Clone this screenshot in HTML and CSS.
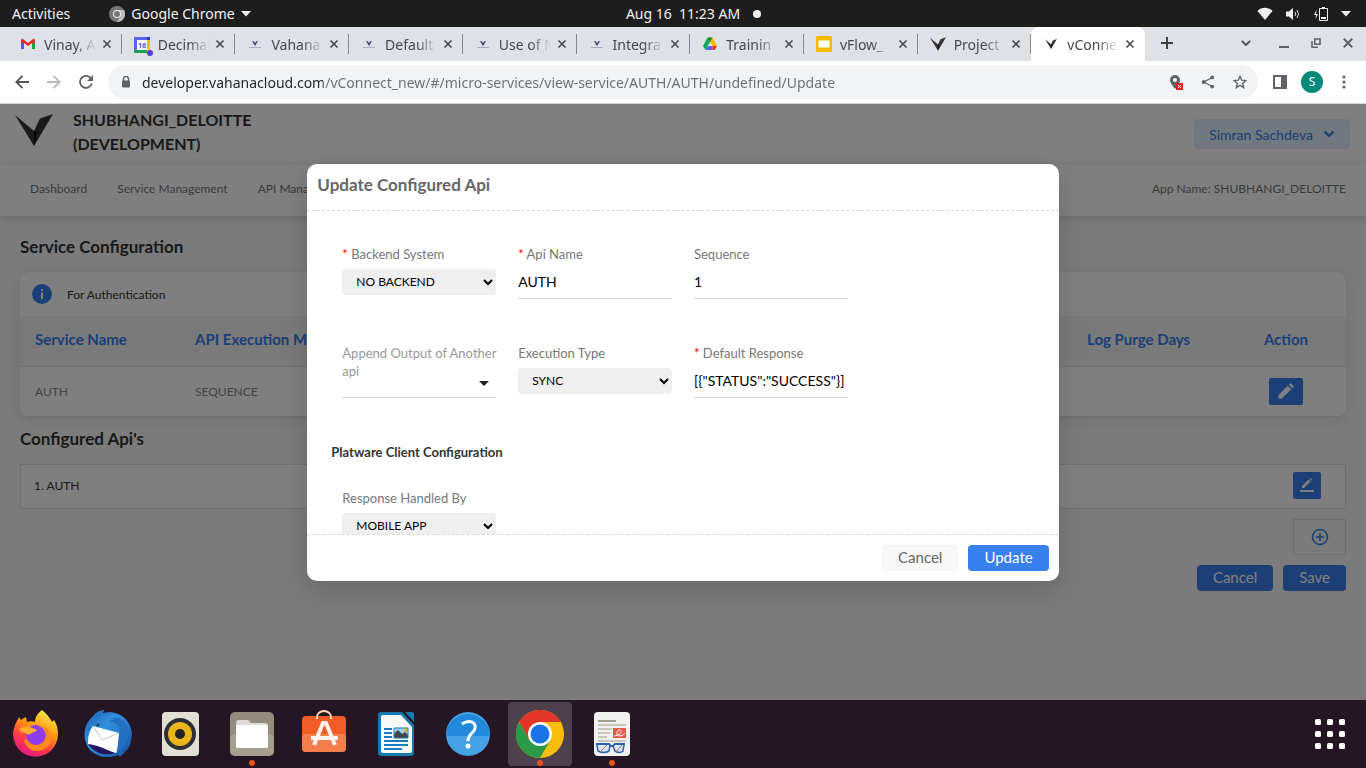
FILE: index.html
```html
<!DOCTYPE html>
<html lang="en">
<head>
  <meta charset="UTF-8">
  <title>vConnect</title>
  <link rel="stylesheet" href="styles.css">
</head>
<body>
  <svg class="defs" aria-hidden="true">
    <symbol id="close" viewBox="0 0 10 10"><path d="M1.5 1.5l7 7M8.5 1.5l-7 7" stroke="currentColor" stroke-width="1.6" fill="none"/></symbol>
    <symbol id="vahana-small" viewBox="0 0 16 16"><path d="M5 5l2.2.6L8 7.5l1-2 2-.5-3 5z" fill="#39396b"/><path d="M2 11.5h12" stroke="#a9aec4" stroke-width="1"/></symbol>
    <symbol id="vahana" viewBox="0 0 38 32"><path d="M0 1l19 16 6-12.500L38 0 19 32z" fill="#353535"/><path d="M19 17l3 2-3 13z" fill="#000"/></symbol>
  </svg>

  <div class="topbar">
    <div class="topbar-left">
      <button class="top-button">Activities</button>
      <button class="top-button app-menu">
        <svg width="16" height="16" viewBox="0 0 16 16"><circle cx="8" cy="8" r="8" fill="#777"/><path d="M8 4h7a8 8 0 0 1-7 12l3.500-6z" fill="#bbb"/><circle cx="8" cy="8" r="4" fill="#eee"/><circle cx="8" cy="8" r="3" fill="#777"/></svg>
        Google Chrome
        <svg width="10" height="6" viewBox="0 0 10 6"><path d="M0 0h10L5 5.500z" fill="#f2f2f2"/></svg>
      </button>
    </div>
    <button class="top-button clock">Aug 16&nbsp; 11:23 AM <span class="notice-dot"></span></button>
    <div class="topbar-right">
      <svg width="16" height="14" viewBox="0 0 16 14"><path d="M.5 4C4.500-.2 11.500-.2 15.500 4L8 13z" fill="#f2f2f2"/></svg>
      <svg width="16" height="14" viewBox="0 0 16 14"><path d="M1 4.500h3L8 1v12L4 9.500H1z" fill="#f2f2f2"/><path d="M10 5q1.500 2 0 4M12 3q3 4 0 8" stroke="#ddd" fill="none"/></svg>
      <svg width="16" height="16" viewBox="0 0 16 16"><path d="M3.500 4L1 9h2l-.5 4L5 8H3z" fill="#f2f2f2"/><path d="M6.500 2.500h8v12h-8zM9 1.500h3" stroke="#f2f2f2" fill="none"/><path d="M8 11h5v2H8z" fill="#f2f2f2"/></svg>
      <svg width="10" height="6" viewBox="0 0 10 6"><path d="M0 0h10L5 5.500z" fill="#f2f2f2"/></svg>
    </div>
  </div>

  <div class="tabstrip">
    <div class="tabs">
      <div class="tab">
        <svg width="16" height="16" viewBox="0 0 16 16"><path d="M1 13V5l3 2v6z" fill="#4a5bf0"/><path d="M12 13V7l3-2v8z" fill="#17a34a"/><path d="M1 6V4q0-1.500 2-1l5 4 5-4q2-.5 2 1v2l-3 2V7l-4 3-4-3v1z" fill="#ea2b1f"/></svg>
        <span class="tab-title">Vinay, Ajay</span>
        <button class="tab-close" aria-label="Close"><svg width="10" height="10"><use href="#close"/></svg></button>
      </div>
      <div class="tab">
        <svg width="16" height="17" viewBox="0 0 16 17"><path d="M0 1h13v3H3v13H0z" fill="#5b63f5"/><path d="M13 1h3v3h-3z" fill="#2b3bc0"/><path d="M13 4h3v10h-3z" fill="#fbbc04"/><path d="M0 14h13v3H0z" fill="#16a34a"/><path d="M3 4h10v10H3z" fill="#fff"/><text x="8" y="12" class="cal-day">16</text><circle cx="16" cy="17" r="3" fill="#4a3df0"/></svg>
        <span class="tab-title">Decimal</span>
        <button class="tab-close" aria-label="Close"><svg width="10" height="10"><use href="#close"/></svg></button>
      </div>
      <div class="tab">
        <svg width="16" height="16"><use href="#vahana-small"/></svg>
        <span class="tab-title">Vahana</span>
        <button class="tab-close" aria-label="Close"><svg width="10" height="10"><use href="#close"/></svg></button>
      </div>
      <div class="tab">
        <svg width="16" height="16"><use href="#vahana-small"/></svg>
        <span class="tab-title">Default</span>
        <button class="tab-close" aria-label="Close"><svg width="10" height="10"><use href="#close"/></svg></button>
      </div>
      <div class="tab">
        <svg width="16" height="16"><use href="#vahana-small"/></svg>
        <span class="tab-title">Use of N</span>
        <button class="tab-close" aria-label="Close"><svg width="10" height="10"><use href="#close"/></svg></button>
      </div>
      <div class="tab">
        <svg width="16" height="16"><use href="#vahana-small"/></svg>
        <span class="tab-title">Integra</span>
        <button class="tab-close" aria-label="Close"><svg width="10" height="10"><use href="#close"/></svg></button>
      </div>
      <div class="tab">
        <svg width="16" height="16" viewBox="0 0 16 16"><path d="M5.500 1.500L8 6 3.500 14 1 10z" fill="#12a85a"/><path d="M5.500 1.500h5L15 10h-4.500z" fill="#fbbc04"/><path d="M5.500 1.500h5L8 6z" fill="#0b8043"/><path d="M3.500 14L6 10h4.500v4z" fill="#5b63f5"/><path d="M10.500 10H15l-2.500 4h-2z" fill="#ea2b1f"/></svg>
        <span class="tab-title">Trainin</span>
        <button class="tab-close" aria-label="Close"><svg width="10" height="10"><use href="#close"/></svg></button>
      </div>
      <div class="tab">
        <svg width="16" height="16" viewBox="0 0 16 16"><rect width="16" height="16" rx="1.500" fill="#f5b90a"/><path d="M2.500 4.500h11v7h-11z" fill="#fff"/></svg>
        <span class="tab-title">vFlow_</span>
        <button class="tab-close" aria-label="Close"><svg width="10" height="10"><use href="#close"/></svg></button>
      </div>
      <div class="tab">
        <svg width="16" height="16"><use href="#vahana"/></svg>
        <span class="tab-title">Project</span>
        <button class="tab-close" aria-label="Close"><svg width="10" height="10"><use href="#close"/></svg></button>
      </div>
      <div class="tab active">
        <svg width="16" height="10"><use href="#vahana"/></svg>
        <span class="tab-title">vConne</span>
        <button class="tab-close" aria-label="Close"><svg width="10" height="10"><use href="#close"/></svg></button>
      </div>
    </div>
    <button class="icon-button new-tab" aria-label="New tab"><svg width="12" height="12" viewBox="0 0 12 12"><path d="M6 0v12M0 6h12" stroke="#3c4043" stroke-width="2"/></svg></button>
    <div class="window-controls">
      <button class="icon-button tab-search" aria-label="Search tabs"><svg width="10" height="6" viewBox="0 0 10 6"><path d="M.8.8L5 5 9.200.8" stroke="#4a4d52" stroke-width="1.800" fill="none"/></svg></button>
      <button class="icon-button" aria-label="Minimize"><svg width="10" height="10" viewBox="0 0 10 10"><path d="M0 9h10" stroke="#5f6368" stroke-width="2"/></svg></button>
      <button class="icon-button" aria-label="Restore"><svg width="10" height="10" viewBox="0 0 10 10"><path d="M3.800 1h5.200v5.200H3.800zM1 3v6.200h6" stroke="#5f6368" stroke-width="1.600" fill="none"/></svg></button>
      <button class="icon-button" aria-label="Close window"><svg width="10" height="10" viewBox="0 0 10 10"><path d="M.8.8l8.400 8.400M9.200.8L.8 9.200" stroke="#5f6368" stroke-width="2"/></svg></button>
    </div>
  </div>

  <div class="toolbar">
    <button class="icon-button" aria-label="Back"><svg width="14" height="14" viewBox="0 0 14 14"><path d="M14 7H1.500M7.500.8L1.300 7l6.200 6.200" stroke="#4f5357" stroke-width="1.800" fill="none"/></svg></button>
    <button class="icon-button" aria-label="Forward"><svg width="14" height="14" viewBox="0 0 14 14"><path d="M0 7h12.500M6.500.8L12.700 7l-6.200 6.200" stroke="#b8babd" stroke-width="1.800" fill="none"/></svg></button>
    <button class="icon-button" aria-label="Reload"><svg width="14" height="14" viewBox="0 0 14 14"><path d="M12 3.500A6 6 0 1 0 12.800 8.500" stroke="#5f6368" stroke-width="1.800" fill="none"/><path d="M14 0v6H8z" fill="#5f6368"/></svg></button>
    <div class="omnibox">
      <svg width="10" height="12" viewBox="0 0 10 12"><path d="M2.500 5V3a2.500 2.500 0 0 1 5 0v2" stroke="#5f6368" stroke-width="1.400" fill="none"/><rect x="1" y="4.500" width="8" height="7" rx="1" fill="#5f6368"/></svg>
      <input class="url" type="text" aria-label="Address" value="developer.vahanacloud.com/vConnect_new/#/micro-services/view-service/AUTH/AUTH/undefined/Update">
      <button class="icon-button" aria-label="Location blocked"><svg width="16" height="16" viewBox="0 0 16 16"><path d="M7 15C4 11 2 9 2 6a5 5 0 0 1 10 0c0 3-2 5-5 9z" fill="#5f6368"/><circle cx="7" cy="6" r="2" fill="#f1f3f4"/><rect x="8" y="9" width="7" height="7" fill="#e42020"/><path d="M10 11l3 3M13 11l-3 3" stroke="#fff"/></svg></button>
      <button class="icon-button" aria-label="Share"><svg width="14" height="14" viewBox="0 0 14 14"><path d="M11 2.500L3 7l8 4.500" stroke="#5f6368" stroke-width="1.300" fill="none"/><circle cx="11.200" cy="2.400" r="1.900" fill="#5f6368"/><circle cx="2.600" cy="7" r="1.900" fill="#5f6368"/><circle cx="11.200" cy="11.600" r="1.900" fill="#5f6368"/></svg></button>
      <button class="icon-button" aria-label="Bookmark"><svg width="14" height="14" viewBox="0 0 14 14"><path d="M7 1.300l1.700 3.900 4.200.4-3.200 2.800 1 4.200L7 10.400l-3.700 2.200 1-4.200-3.200-2.800 4.200-.4z" stroke="#5f6368" stroke-width="1.400" fill="none"/></svg></button>
    </div>
    <button class="icon-button" aria-label="Side panel"><svg width="14" height="14" viewBox="0 0 14 14"><path d="M1 1h12v12H1z" stroke="#5f6368" stroke-width="2" fill="none"/><path d="M8 1h5v12H8z" fill="#5f6368"/></svg></button>
    <button class="icon-button" aria-label="Profile"><span class="avatar">S</span></button>
    <button class="icon-button" aria-label="Menu"><svg width="4" height="14" viewBox="0 0 4 14" fill="#5f6368"><circle cx="2" cy="2" r="1.600"/><circle cx="2" cy="7" r="1.600"/><circle cx="2" cy="12" r="1.600"/></svg></button>
  </div>

  <div class="page">
    <header class="header">
      <svg width="38" height="32"><use href="#vahana"/></svg>
      <div class="app-title">SHUBHANGI_DELOITTE<br>(DEVELOPMENT)</div>
      <button class="user-button">Simran Sachdeva
        <svg width="12" height="8" viewBox="0 0 12 8"><path d="M1.500 1.500L6 6l4.500-4.500" stroke="#3880ed" stroke-width="2.200" fill="none"/></svg>
      </button>
    </header>
    <nav class="nav">
      <a href="#">Dashboard</a>
      <a href="#">Service Management</a>
      <a href="#">API Management</a>
      <span class="app-name">App Name: SHUBHANGI_DELOITTE</span>
    </nav>

    <main class="content">
      <h1>Service Configuration</h1>
      <section class="card">
        <div class="card-info">
          <svg width="20" height="20" viewBox="0 0 20 20"><circle cx="10" cy="10" r="10" fill="#3880ed"/><path d="M9 8.500h2V15H9zM9 5h2v2H9z" fill="#fff"/></svg>
          For Authentication
        </div>
        <table class="services">
          <thead>
            <tr><th class="col-name">Service Name</th><th>API Execution Mode</th><th class="col-days">Log Purge Days</th><th class="col-action">Action</th></tr>
          </thead>
          <tbody>
            <tr>
              <td>AUTH</td><td>SEQUENCE</td><td></td>
              <td class="col-action"><button class="edit-button wide" aria-label="Edit service"><svg width="16" height="16" viewBox="0 0 16 16"><path d="M.5 15.500V12L9.800 2.700l3.500 3.500L4 15.500zM10.800 1.700l1-1q.8-.7 1.600 0l1.900 1.900q.7.8 0 1.600l-1 1z" fill="#fff"/></svg></button></td>
            </tr>
          </tbody>
        </table>
      </section>

      <h1 class="api-title">Configured Api's</h1>
      <div class="api-row">
        1. AUTH
        <button class="edit-button" aria-label="Edit api"><svg width="14" height="14" viewBox="0 0 14 14"><path d="M2 10V8l6.500-6.500 2 2L4 10zM9.300.8L10.500 0l1.500 1.500-.8 1.200zM0 12h14v2H0z" fill="#fff"/></svg></button>
      </div>
      <div class="page-actions">
        <button class="add-button" aria-label="Add api"><svg width="18" height="18" viewBox="0 0 18 18"><circle cx="9" cy="9" r="7.500" stroke="#3880ed" stroke-width="1.600" fill="none"/><path d="M9 5v8M5 9h8" stroke="#3880ed" stroke-width="1.600"/></svg></button>
      </div>
      <div class="page-actions">
        <button class="button primary">Cancel</button>
        <button class="button primary">Save</button>
      </div>
    </main>

    <div class="overlay">
      <form class="modal" role="dialog" aria-labelledby="modal-title">
        <h2 class="modal-header" id="modal-title">Update Configured Api</h2>
        <div class="modal-body">
          <div class="fields">
            <div class="field">
              <label for="backend"><span class="required">*</span> Backend System</label>
              <select id="backend"><option>NO BACKEND</option></select>
            </div>
            <div class="field">
              <label for="api-name"><span class="required">*</span> Api Name</label>
              <input id="api-name" type="text" value="AUTH">
            </div>
            <div class="field">
              <label for="sequence">Sequence</label>
              <input id="sequence" type="text" value="1">
            </div>
            <div class="field append">
              <label for="append">Append Output of Another api</label>
              <select id="append" class="line-select"><option></option></select>
            </div>
            <div class="field">
              <label for="execution">Execution Type</label>
              <select id="execution"><option>SYNC</option></select>
            </div>
            <div class="field">
              <label for="response"><span class="required">*</span> Default Response</label>
              <input id="response" type="text" value="[{&quot;STATUS&quot;:&quot;SUCCESS&quot;}]">
            </div>
          </div>
          <h3>Platware Client Configuration</h3>
          <div class="fields">
            <div class="field">
              <label for="handled">Response Handled By</label>
              <select id="handled"><option>MOBILE APP</option></select>
            </div>
          </div>
        </div>
        <div class="modal-footer">
          <button type="button" class="button">Cancel</button>
          <button type="button" class="button primary">Update</button>
        </div>
      </form>
    </div>
  </div>

  <div class="dock">
    <button class="dock-item" aria-label="Firefox">
      <svg width="48" height="48" viewBox="0 0 48 48">
        <defs><linearGradient id="fx" x1=".8" y1="0" x2=".3" y2="1"><stop offset="0" stop-color="#fff44f"/><stop offset=".4" stop-color="#ff980e"/><stop offset=".7" stop-color="#ff3b47"/><stop offset="1" stop-color="#e31587"/></linearGradient></defs>
        <path d="M30 0c5 4 8 8 10 12l2-2c3 5 4 9 4 14a22.500 22.500 0 1 1-43-9c1-3 3-5 4-8l2 3c1-1 3-2 5-3l1 5c2-1 6-1 8 0 0-5 3-9 7-12z" fill="url(#fx)"/>
        <circle cx="24" cy="25" r="10" fill="#8e3df0"/><path d="M15 29c2 5 6 6 10 6 6-1 9-5 9-10-1-5-4-8-8-9 9 0 13 5 13 12s-6 13-14 13c-7 0-12-5-13-11z" fill="#ff8a1c"/><path d="M7 19c5-3 10-3 18 1-2 3-6 2-8 5-4-3-9-2-10-6z" fill="#ffad2b"/>
      </svg>
    </button>
    <button class="dock-item" aria-label="Thunderbird">
      <svg width="48" height="48" viewBox="0 0 48 48">
        <defs><linearGradient id="tb" x1="0" y1="0" x2="1" y2="1"><stop offset="0" stop-color="#1b5fae"/><stop offset=".4" stop-color="#3092e0"/><stop offset="1" stop-color="#174b9c"/></linearGradient></defs>
        <path d="M10 5C14 0 20 0 20 0l-1 3c15-4 29 7 29 22l-2 10c-3 7-8 9-10 12l-2-2c-10 4-20 2-27-4C-1 33-2 18 6 9z" fill="url(#tb)"/>
        <path d="M9 16l26 7-2 20C22 42 12 38 4 34c0-7 1-13 5-18z" fill="#fff"/><path d="M9 16l9 14 17-7" stroke="#c2c6cc" fill="none"/>
        <path d="M4 34c9 1 15 4 27 9-9 3-20 1-27-9z" fill="#26155b"/><path d="M35 23c4-6-4-12-11-11l8-5c8 2 13 9 12 21-2 7-8 11-12 16 2-8 5-14 3-21z" fill="#236fc4"/><circle cx="14" cy="15" r="1.500" fill="#173a66"/>
      </svg>
    </button>
    <button class="dock-item" aria-label="Rhythmbox">
      <svg width="48" height="48" viewBox="0 0 48 48"><rect x="6" y="2" width="37" height="44" rx="4" fill="#e2dfd4"/><circle cx="24" cy="24" r="16" fill="#2c3035"/><circle cx="24" cy="24" r="12" fill="#e9b51b"/><circle cx="24" cy="24" r="5" fill="#222"/></svg>
    </button>
    <button class="dock-item running" aria-label="Files">
      <svg width="48" height="48" viewBox="0 0 48 48"><rect x="2" y="2" width="44" height="44" rx="5" fill="#948b7b"/><rect x="2" y="24" width="44" height="22" rx="5" fill="#a69e8e"/><path d="M8 13q0-3 3-3h8q2 0 3 2l1 1h14q3 0 3 3v19q0 3-3 3H11q-3 0-3-3z" fill="#dedbd4"/><rect x="8" y="15" width="32" height="23" rx="2" fill="#fff"/></svg>
    </button>
    <button class="dock-item" aria-label="Software">
      <svg width="48" height="48" viewBox="0 0 48 48"><rect x="2" y="6" width="44" height="36" rx="4" fill="#f25d27"/><rect x="2" y="24" width="44" height="18" rx="4" fill="#f47e4c"/><path d="M17 9V7a7 6 0 0 1 14 0v2" stroke="#ffd9b8" stroke-width="2" fill="none"/><path d="M14 35l9-22h3l9 22M11 28h27" stroke="#fff3ec" stroke-width="4" fill="none"/></svg>
    </button>
    <button class="dock-item" aria-label="LibreOffice Writer">
      <svg width="48" height="48" viewBox="0 0 48 48"><path d="M9 2h21l12 13v28q0 3-3 3H9q-3 0-3-3V5q0-3 3-3z" fill="#1679ae"/><path d="M33 2h7q2 0 2 2v8z" fill="#1679ae"/><path d="M11 5h18l11 12v24q0 2-2 2H11q-2 0-2-2V7q0-2 2-2z" fill="#f8f8f8"/><path d="M12 19h8M12 23h8M12 27h8M12 31h24M12 35h24M12 39h18" stroke="#167fbb" stroke-width="2"/><rect x="22" y="18" width="14" height="10" fill="#9fd2f2"/><path d="M22 28v-4l4-4 4 4 3-2 3 3v3z" fill="#444"/><circle cx="34" cy="20" r="2" fill="#f5b80a"/><path d="M22 18h14v10H22z" stroke="#167fbb" fill="none"/></svg>
    </button>
    <button class="dock-item" aria-label="Help">
      <svg width="48" height="48" viewBox="0 0 48 48"><circle cx="24" cy="24" r="22" fill="#45a3e4"/><path d="M2 26a22 22 0 0 1 44 0z" fill="#2389db"/><path d="M18 14c7-5 14-2 13 4 0 5-7 5-7 13" stroke="#fff" stroke-width="3" fill="none"/><circle cx="24" cy="36" r="2.500" fill="#fff"/></svg>
    </button>
    <button class="dock-item running focused" aria-label="Google Chrome">
      <svg width="48" height="48" viewBox="0 0 48 48"><circle cx="24" cy="24" r="24" fill="#fbbd0b"/><path d="M3.200 12a24 24 0 0 1 41.600 0H24l-10.400 18z" fill="#e2362b"/><path d="M3.200 12A24 24 0 0 0 24 48l10.400-18H13.600z" fill="#2b9a48"/><circle cx="24" cy="24" r="12" fill="#fff"/><circle cx="24" cy="24" r="9.500" fill="#1a73e8"/></svg>
    </button>
    <button class="dock-item running" aria-label="Document Viewer">
      <svg width="48" height="48" viewBox="0 0 48 48"><rect x="6" y="2" width="36" height="44" rx="4" fill="#f1f1f1"/><path d="M10 11h18" stroke="#a6a08f" stroke-width="2"/><path d="M10 15h28M10 19h14M10 23h12M10 27h9M10 31h28" stroke="#c9c5ba" stroke-width="2"/><rect x="25" y="18" width="13" height="10" fill="#ef5448"/><path d="M26 26c7-1 9-5 6-6s-5 6 0 6q3 0 5-3" stroke="#fff" fill="none"/><path d="M8 34h13l2 2h2l2-2h10" stroke="#2b62ad" stroke-width="2" fill="none"/><path d="M9 35l1 6q6 3 11 0l1-5M25 36l2 5q5 3 8 0l1-6" stroke="#2b62ad" stroke-width="1.500" fill="#dce4ec"/><path d="M12 42l7-7M28 42l6-7" stroke="#888"/></svg>
    </button>
    <button class="show-apps" aria-label="Show Applications">
      <svg width="32" height="32" viewBox="0 0 32 32" fill="#fff"><rect x="1" y="1" width="6" height="6" rx="1.500"/><rect x="13" y="1" width="6" height="6" rx="1.500"/><rect x="25" y="1" width="6" height="6" rx="1.500"/><rect x="1" y="13" width="6" height="6" rx="1.500"/><rect x="13" y="13" width="6" height="6" rx="1.500"/><rect x="25" y="13" width="6" height="6" rx="1.500"/><rect x="1" y="25" width="6" height="6" rx="1.500"/><rect x="13" y="25" width="6" height="6" rx="1.500"/><rect x="25" y="25" width="6" height="6" rx="1.500"/></svg>
    </button>
  </div>
</body>
</html>
```
FILE: styles.css
```css
* {
  box-sizing: border-box;
}

body {
  display: flex;
  flex-direction: column;
  height: 100vh;
  margin: 0;
  overflow: hidden;
  font-family: 'Noto Sans', sans-serif;
  font-size: 14px;
}

button {
  border: none;
  background: none;
  padding: 0;
  font: inherit;
  color: inherit;
  cursor: pointer;
}

svg {
  display: block;
  flex: none;
}

.defs {
  position: absolute;
  width: 0;
  height: 0;
}

/* Desktop top bar */
.topbar {
  display: grid;
  grid-template-columns: 1fr auto 1fr;
  align-items: center;
  height: 27px;
  padding: 0 15px 0 12px;
  background-color: #1d1d1d;
  color: #f2f2f2;
  flex: none;
}

.topbar-left,
.topbar-right,
.top-button {
  display: flex;
  align-items: center;
}

.topbar-left {
  gap: 39px;
}

.topbar-right {
  justify-content: flex-end;
  gap: 12px;
}

.app-menu {
  gap: 6px;
}

.clock {
  gap: 13px;
  padding-left: 24px;
}

.notice-dot {
  width: 8px;
  height: 8px;
  border-radius: 50%;
  background-color: #f2f2f2;
}

/* Browser tabs */
.tabstrip {
  display: flex;
  height: 34px;
  padding: 0 2px 0 8px;
  background-color: #dee1e6;
  color: #45484d;
  flex: none;
}

.tabs {
  display: flex;
  flex: 0 1 1137px;
  min-width: 0;
}

.tab {
  display: flex;
  align-items: center;
  flex: 1 1 0;
  min-width: 0;
  padding: 0 8px 0 12px;
  position: relative;
}

.tab::after {
  content: "";
  position: absolute;
  right: 0;
  top: 7px;
  width: 1px;
  height: 20px;
  background-color: #85888d;
}

.tab.active {
  background-color: white;
  border-radius: 8px 8px 0 0;
}

.tab.active::after {
  display: none;
}

.tab > svg {
  overflow: visible;
}

.tab-title {
  flex: 1;
  min-width: 0;
  margin: 0 4px 0 8px;
  overflow: hidden;
  white-space: nowrap;
  mask-image: linear-gradient(to right, black 60%, transparent);
}

.tab-close {
  padding: 2px;
}

.cal-day {
  font-size: 7px;
  font-weight: bold;
  fill: #3b5bd8;
  text-anchor: middle;
}

.icon-button {
  display: flex;
  align-items: center;
  justify-content: center;
  width: 32px;
  height: 32px;
  flex: none;
}

.new-tab {
  margin-left: 6px;
}

.window-controls {
  display: flex;
  margin-left: auto;
}

.tab-search {
  margin-right: 6px;
}

/* Address bar */
.toolbar {
  display: flex;
  align-items: center;
  height: 43px;
  padding: 0 6px;
  border-bottom: 1px solid #d5d7da;
  background-color: white;
  flex: none;
}

.omnibox {
  display: flex;
  align-items: center;
  flex: 1;
  height: 34px;
  margin: 0 6px;
  padding: 0 2px 0 13px;
  border-radius: 17px;
  background-color: #f1f3f4;
}

.url {
  flex: 1;
  min-width: 0;
  height: 30px;
  margin-left: 11px;
  padding: 0;
  border: none;
  font: inherit;
  color: transparent;
  /* dark host, grey path */
  background: linear-gradient(to right, #202124 181px, #6a6d71 181px);
  -webkit-background-clip: text;
}

.avatar {
  width: 22px;
  height: 22px;
  border-radius: 50%;
  background-color: #00897b;
  color: white;
  font-size: 12px;
  line-height: 22px;
}

/* Web page */
.page {
  flex: 1;
  min-height: 0;
  position: relative;
  overflow: hidden;
  background-color: #f6f6f6;
  color: #333;
  font-family: Lato, sans-serif;
  font-size: 12px;
}

.header {
  display: flex;
  align-items: center;
  height: 60px;
  padding: 0 16px 0 15px;
  background-color: white;
}

.header > svg {
  margin-bottom: 8px;
}

.app-title {
  margin-left: 20px;
  margin-bottom: 4px;
  font-size: 16px;
  font-weight: bold;
  line-height: 24px;
}

.user-button {
  display: flex;
  align-items: center;
  gap: 10px;
  height: 30px;
  margin-left: auto;
  padding: 0 15px;
  border-radius: 4px;
  background-color: #e3f1ff;
  color: #3880ed;
  font-size: 14px;
}

.nav {
  display: flex;
  align-items: center;
  gap: 30px;
  height: 52px;
  padding: 0 20px 4px 30px;
  background-color: white;
  border-top: 1px solid #fafafa;
  box-shadow: 0 2px 8px rgba(0, 0, 0, 0.15);
  color: #777;
}

.nav a {
  color: inherit;
  text-decoration: none;
}

.app-name {
  margin-left: auto;
}

.content {
  padding: 20px;
}

h1 {
  margin: 0 0 14px;
  font-size: 17px;
  line-height: 22px;
}

.card {
  border-radius: 10px;
  background-color: white;
  box-shadow: 0 2px 12px rgba(0, 0, 0, 0.1);
  overflow: hidden;
}

.card-info {
  display: flex;
  align-items: center;
  gap: 15px;
  height: 44px;
  padding-left: 12px;
}

.services {
  width: 100%;
  table-layout: fixed;
  border-collapse: collapse;
  text-align: left;
}

.services th,
.services td {
  height: 50px;
  padding: 0 15px;
  border-bottom: 1px solid #dcdcdc;
}

.services th {
  padding-bottom: 4px;
  background-color: #f4f4f4;
  color: #3880ed;
  font-size: 15px;
}

.services td {
  color: #888;
}

.col-name {
  width: 160px;
}

.col-days {
  width: 154px;
}

.services .col-action {
  width: 120px;
  text-align: center;
}

.edit-button {
  display: flex;
  align-items: center;
  justify-content: center;
  width: 28px;
  height: 27px;
  border-radius: 2px;
  background-color: #3880ed;
}

.edit-button.wide {
  width: 34px;
  margin: 0 auto;
}

.api-title {
  margin: 11px 0 14px;
}

.api-row {
  display: flex;
  align-items: center;
  justify-content: space-between;
  height: 45px;
  padding: 0 24px 2px 13px;
  border: 1px solid #dcdcdc;
  background-color: white;
}

.page-actions {
  display: flex;
  justify-content: flex-end;
  gap: 10px;
  margin-top: 10px;
}

.add-button {
  display: flex;
  align-items: center;
  justify-content: center;
  width: 53px;
  height: 36px;
  border: 1px solid #dcdcdc;
}

.button {
  height: 26px;
  padding: 0 16px 2px;
  border-radius: 4px;
  background-color: #f7f7f7;
  color: #666;
  font-size: 15px;
}

.button.primary {
  background-color: #3880ed;
  color: white;
}

/* Modal */
.overlay {
  position: absolute;
  inset: 0;
  display: flex;
  justify-content: center;
  align-items: flex-start;
  padding-top: 60px;
  background-color: rgba(0, 0, 0, 0.5);
}

.modal {
  display: flex;
  flex-direction: column;
  width: 55%;
  height: 417px;
  border-radius: 10px;
  background-color: white;
  box-shadow: 0 8px 24px rgba(0, 0, 0, 0.15);
}

.modal-header {
  height: 47px;
  margin: 0;
  padding: 10px;
  border-bottom: 1px dashed #d8d8d8;
  color: #666;
  font-size: 17px;
  line-height: 22px;
  flex: none;
}

.modal-body {
  flex: 1;
  min-height: 0;
  padding: 34px 35px 0;
  overflow: hidden;
}

.fields {
  display: grid;
  grid-template-columns: repeat(4, 1fr);
  gap: 45px 22px;
}

.field {
  display: flex;
  flex-direction: column;
  height: 54px;
}

.append {
  grid-column: 1;
}

.field label {
  color: #777;
  font-size: 13px;
  line-height: 18px;
}

.append label {
  color: #999;
}

.required {
  color: red;
}

.field select {
  height: 26px;
  margin-top: 6px;
  padding: 0 10px 2px;
  border: none;
  border-radius: 4px;
  background-color: #efefef;
  color: black;
  font: inherit;
}

.field input {
  width: 100%;
  height: 33px;
  margin-top: 3px;
  padding: 0 0 2px;
  border: none;
  border-bottom: 1px solid #d6d7df;
  color: black;
  font: inherit;
  font-size: 14px;
}

.field .line-select {
  height: 24px;
  margin-top: -6px;
  border-bottom: 1px solid #d6d7df;
  border-radius: 0;
  appearance: none;
  background: url("data:image/svg+xml,%3Csvg xmlns='http://www.w3.org/2000/svg' width='10' height='5'%3E%3Cpath d='M0 0h10L5 5z' fill='%23222'/%3E%3C/svg%3E") no-repeat right 7px top 7px;
}

h3 {
  margin: 45px 0 28px -11px;
  font-size: 13px;
  line-height: 18px;
}

.modal-footer {
  display: flex;
  justify-content: flex-end;
  gap: 10px;
  padding: 10px;
  border-top: 1px dashed #d8d8d8;
  flex: none;
}

/* Dock */
.dock {
  display: flex;
  align-items: center;
  gap: 8px;
  height: 68px;
  padding: 0 20px 0 4px;
  background-color: #241622;
  flex: none;
}

.dock-item {
  display: flex;
  align-items: center;
  justify-content: center;
  width: 64px;
  height: 64px;
  border-radius: 4px;
  position: relative;
}

.dock-item.focused {
  background-color: #4d424b;
}

.dock-item.running::after {
  content: "";
  position: absolute;
  left: 29px;
  bottom: 0;
  width: 6px;
  height: 6px;
  border-radius: 50%;
  background-color: #e95420;
}

.show-apps {
  margin-left: auto;
}
```
